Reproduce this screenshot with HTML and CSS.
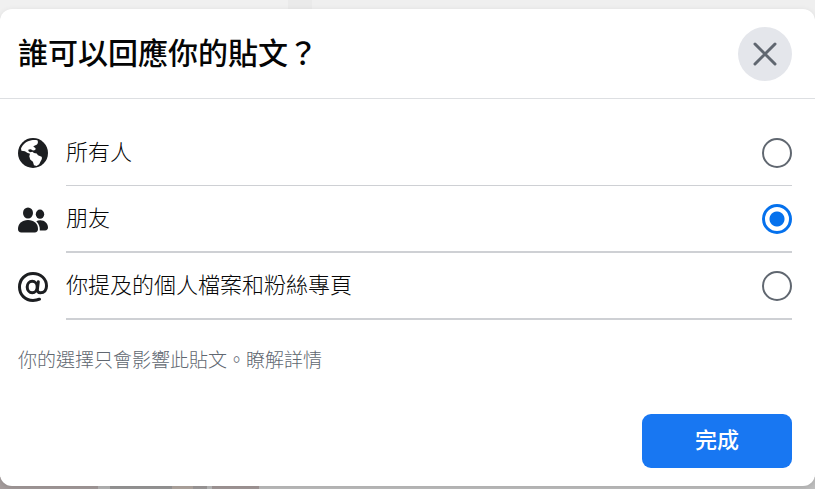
FILE: index.html
```html
<!DOCTYPE html>
<html lang="zh-Hant">
<head>
<meta charset="utf-8">
<meta name="viewport" content="width=device-width, initial-scale=1">
<title>誰可以回應你的貼文？</title>
<link rel="stylesheet" href="styles.css">
</head>
<body>
<form class="dialog" role="dialog" aria-labelledby="dialog-title">
  <header class="dialog-header">
    <h1 id="dialog-title">誰可以回應你的貼文？</h1>
    <button class="close" type="button" aria-label="關閉">
      <svg viewBox="0 0 24 24" aria-hidden="true"><path d="M2 2L22 22M22 2L2 22" fill="none" stroke="currentColor" stroke-width="3" stroke-linecap="round"/></svg>
    </button>
  </header>
  <div class="options">
    <label class="option" for="everyone">
      <svg class="icon" viewBox="0 0 30 30" aria-hidden="true">
        <circle cx="15" cy="15" r="15" fill="#1c1e21"/>
        <path d="M3 10.5C4.8 6.2 8.6 2.9 13.5 2.2C15.5 1.8 17.5 1.9 19.4 2.3C20.2 3.8 20.1 5.3 19 6.4C17.8 7.3 16 7.5 15.3 8.4L17.6 10.2L17.3 12.1L15 12.4L12.8 11.2L10.6 11.6L10.3 13.1L12 14.2L14.4 13.8L16 14.9L18.7 15.4L20 17.2L23.6 18.8C24.4 20 23.8 21.7 22.8 23L21.2 26.3L18.6 28L16 27.2L14.9 23.8L12.2 21.4L11.3 18.2L12 15.8L9.2 14.7L6.9 13.2L3.4 12.7Z" fill="#fff"/>
      </svg>
      <span class="option-line first"><span class="option-text">所有人</span><input type="radio" name="audience" id="everyone"></span>
    </label>
    <label class="option" for="friends">
      <svg class="icon" viewBox="0 0 30 30" aria-hidden="true" fill="#1c1e21">
        <ellipse cx="10" cy="8" rx="5" ry="5.5"/>
        <ellipse cx="22" cy="9.2" rx="4.2" ry="4.6"/>
        <path d="M0 24C0 18.5 4 15 10 15C16 15 20 18.5 20 24C20 26.2 18.8 27.5 16.7 27.5H3.3C1.2 27.5 0 26.2 0 24Z"/>
        <path d="M18.3 16.2C19.4 15.6 20.7 15.3 22.2 15.3C26.9 15.3 30 18.6 30 22.5C30 24.3 28.9 25.4 27.2 25.4H21.8C22 21.8 20.9 18.6 18.3 16.2Z"/>
      </svg>
      <span class="option-line"><span class="option-text">朋友</span><input type="radio" name="audience" id="friends" checked></span>
    </label>
    <label class="option" for="mentioned">
      <svg class="icon" viewBox="0 0 30 30" aria-hidden="true" fill="none" stroke="#1c1e21" stroke-width="3" stroke-linecap="round">
        <ellipse cx="14.2" cy="15" rx="5" ry="5.7"/>
        <path d="M20.3 9.8L19.4 17C19 19.3 20.2 20.8 22.4 20.8C26.3 20.8 28.5 18 28.5 14C28.5 6.7 22.6 1.5 15 1.5C7.3 1.5 1.5 7.3 1.5 15C1.5 22.8 7.2 28.5 15 28.5C17.5 28.5 19.6 28.1 21.5 27.2"/>
      </svg>
      <span class="option-line"><span class="option-text">你提及的個人檔案和粉絲專頁</span><input type="radio" name="audience" id="mentioned"></span>
    </label>
  </div>
  <p class="note">你的選擇只會影響此貼文。<a href="#details">瞭解詳情</a></p>
  <footer class="dialog-footer"><button class="done" type="button">完成</button></footer>
</form>
</body>
</html>
```
FILE: styles.css
```css
* {
  box-sizing: border-box;
}

body {
  margin: 0;
  padding-top: 9px;
  min-height: 100vh;
  overflow: hidden;
  font-family: "Noto Sans CJK TC", sans-serif;
  color: #050505;
  background:
    linear-gradient(90deg, #a69d9d 0 98px, #b9b9b9 98px 110px, #9b9a9a 110px 172px, #b4aaa3 172px 193px, #a09c9c 193px 207px, #bdbdbd 207px 212px, #a59b9b 212px 259px, #c0c0c0 259px) bottom / 100% 12px no-repeat,
    linear-gradient(90deg, #f0f0f0 0 288px, #eaeaea 288px 312px, #efefef 312px);
}

.dialog {
  background: #fff;
  border-radius: 12px;
  box-shadow: 0 2px 6px rgb(0 0 0 / 12%);
}

.dialog-header {
  display: flex;
  align-items: center;
  justify-content: space-between;
  padding: 18px 23px 17px 18px;
  border-bottom: 1px solid #dddfe2;
}

h1 {
  margin: 0;
  padding-bottom: 6px;
  font-size: 30px;
  font-weight: 500;
  line-height: 48px;
}

.close {
  display: grid;
  place-items: center;
  width: 54px;
  height: 54px;
  padding: 0;
  border: 0;
  border-radius: 50%;
  color: #606770;
  background: #e4e6eb;
}

.close svg {
  width: 24px;
  height: 24px;
}

.options {
  padding: 21px 23px 0 18px;
}

.option {
  display: flex;
  align-items: center;
  gap: 18px;
  font-size: 22px;
  font-weight: 300;
  line-height: 24px;
}

.icon {
  flex: none;
  width: 30px;
  height: 30px;
}

.option-line {
  flex: 1;
  display: flex;
  align-items: center;
  justify-content: space-between;
  padding: 18px 0 17px;
  border-bottom: 2px solid #ced0d4;
}

.option-line.first {
  border-bottom-width: 1px;
}

.option-text {
  padding-bottom: 6px;
}

input {
  appearance: none;
  flex: none;
  width: 30px;
  height: 30px;
  margin: 0;
  border: 2px solid #606770;
  border-radius: 50%;
}

input:checked {
  border: 3px solid #0571ed;
  background: radial-gradient(circle, #0571ed 7px, transparent 8px);
}

.note {
  margin: 0;
  padding: 24px 18px 0;
  font-size: 19px;
  font-weight: 300;
  line-height: 30px;
  color: #606770;
}

.note a {
  color: inherit;
  text-decoration: none;
}

.dialog-footer {
  display: flex;
  justify-content: flex-end;
  padding: 40px 23px 18px;
}

.done {
  width: 150px;
  height: 54px;
  padding: 0 0 6px;
  border: 0;
  border-radius: 9px;
  font: 500 22px "Noto Sans CJK TC", sans-serif;
  color: #fff;
  background: #1877f2;
}
```
